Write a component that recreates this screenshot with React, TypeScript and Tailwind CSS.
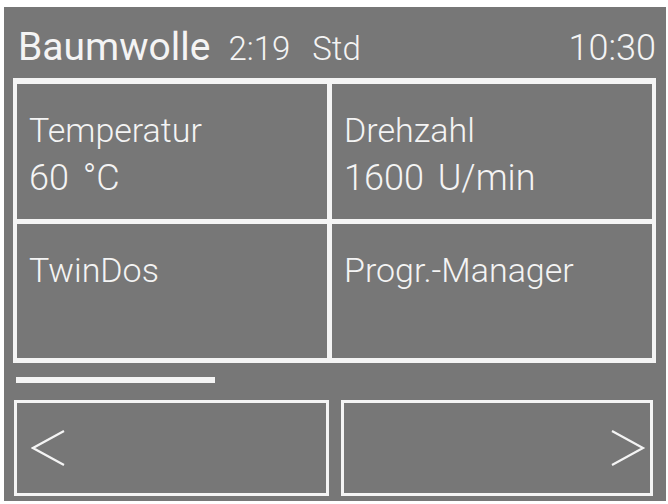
import React from 'react';

function Chevron({ dir }: { dir: 'left' | 'right' }) {
  const points = dir === 'left' ? '33,1 2,18 33,35' : '1,1 32,18 1,35';
  return (
    <svg width="35" height="36" viewBox="0 0 35 36" fill="none">
      <polyline points={points} stroke="#f4f4f4" strokeWidth="2.2" strokeLinejoin="miter" />
    </svg>
  );
}

function Cell({ title, value }: { title: string; value?: string }) {
  return (
    <div className="bg-[#777777] pl-[12px] pt-[22px] text-[#f4f4f4] font-light whitespace-nowrap">
      <div className="text-[34px] leading-[48px]">{title}</div>
      {value && <div className="text-[36px] leading-[48px] [word-spacing:5px]">{value}</div>}
    </div>
  );
}

export default function App() {
  return (
    <div
      className="w-[668px] h-[504px] bg-white pt-[7px] pl-[4px] pr-[2px] pb-[3px] flex"
      style={{ fontFamily: 'Roboto, "Liberation Sans", sans-serif' }}
    >
      <div className="flex-1 flex flex-col bg-[#777777]">
        {/* header */}
        <div className="h-[71px] pt-[21px] pl-[14px] pr-[10px] flex items-baseline text-[#f4f4f4]">
          <span className="text-[39px] leading-none">Baumwolle</span>
          <span className="ml-[18px] text-[33px] leading-none font-light">2:19</span>
          <span className="ml-[22px] text-[33px] leading-none font-light">Std</span>
          <span className="ml-auto text-[36px] leading-none font-light">10:30</span>
        </div>

        {/* options grid */}
        <div className="ml-[9px] mr-[10px] h-[285px] bg-[#f4f4f4] pt-[6px] px-[4px] pb-[5px] grid grid-cols-[310px_1fr] grid-rows-2 gap-[5px]">
          <Cell title="Temperatur" value="60 °C" />
          <Cell title="Drehzahl" value="1600 U/min" />
          <Cell title="TwinDos" />
          <Cell title="Progr.-Manager" />
        </div>

        {/* progress */}
        <div className="ml-[12px] mt-[14px] w-[199px] h-[6px] bg-[#f4f4f4]" />

        {/* nav buttons */}
        <div className="mt-[17px] ml-[10px] mr-[13px] h-[96px] flex gap-[12px]">
          <div className="w-[315px] border-[3px] border-[#f4f4f4] flex items-center pl-[14px]">
            <Chevron dir="left" />
          </div>
          <div className="flex-1 border-[3px] border-[#f4f4f4] flex items-center justify-end pr-[4px]">
            <Chevron dir="right" />
          </div>
        </div>
      </div>
    </div>
  );
}
